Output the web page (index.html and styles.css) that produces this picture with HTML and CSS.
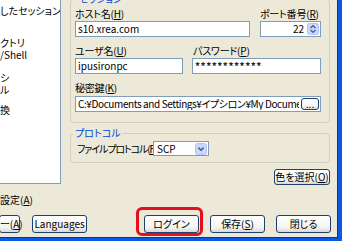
FILE: index.html
```html
<!DOCTYPE html>
<html>
<head>
<meta charset="utf-8">
<link rel="stylesheet" href="styles.css">
</head>
<body>
<div class="window">
<div class="client">

  <div class="main">
    <div class="tree">
      <div class="node">したセッション</div>
      <div class="node gap-l">クトリ</div>
      <div class="node">/Shell</div>
      <div class="node gap-m">シ</div>
      <div class="node">ル</div>
      <div class="node gap-s">換</div>
    </div>

    <div class="panel">
      <div class="group session">
        <div class="group-title">セッション</div>
        <div class="row row-host">
          <div class="field host">
            <span class="caption">ホスト名(<u>H</u>)</span>
            <div class="edit">s10.xrea.com</div>
          </div>
          <div class="field port">
            <span class="caption">ポート番号(<u>R</u>)</span>
            <div class="edit spin">
              <span class="value">22</span>
              <svg class="spin-btn" width="12" height="12" viewBox="0 0 12 12">
                <rect x="0.5" y="0.5" width="11" height="11" rx="2" fill="#C9D8FC" stroke="#AFC4F4"/>
                <path d="M3.5 5 L6 2.7 L8.5 5" fill="none" stroke="#4D6185" stroke-width="1.3"/>
                <path d="M3.5 7 L6 9.3 L8.5 7" fill="none" stroke="#4D6185" stroke-width="1.3"/>
              </svg>
            </div>
          </div>
        </div>
        <div class="row row-user">
          <div class="field user">
            <span class="caption">ユーザ名(<u>U</u>)</span>
            <div class="edit">ipusironpc</div>
          </div>
          <div class="field pass">
            <span class="caption">パスワード(<u>P</u>)</span>
            <div class="edit secret">************</div>
          </div>
        </div>
        <div class="row row-key">
          <div class="field key">
            <span class="caption">秘密鍵(<u>K</u>)</span>
            <div class="edit keyfile">
              <span class="path">C:¥Documents and Settings¥イプシロン¥My Documents</span>
              <button class="btn browse">...</button>
            </div>
          </div>
        </div>
      </div>

      <div class="group protocol">
        <div class="group-title">プロトコル</div>
        <div class="proto-row">
          <span class="caption proto-label">ファイルプロトコル(<u>F</u>)</span>
          <div class="combo">
            <span class="value">SCP</span>
            <svg class="combo-btn" width="12" height="12" viewBox="0 0 12 12">
              <rect x="0.5" y="0.5" width="11" height="11" rx="2" fill="#C9D8FC" stroke="#AFC4F4"/>
              <path d="M3.4 4.6 L6 7.2 L8.6 4.6" fill="none" stroke="#4D6185" stroke-width="1.6"/>
            </svg>
          </div>
        </div>
      </div>

      <div class="color-row">
        <button class="btn color">色を選択(<u>O</u>)</button>
      </div>
    </div>
  </div>

  <div class="advanced">設定(<u>A</u>)</div>

  <div class="buttons">
    <div class="btn-group left">
      <button class="btn about">ー(<u>A</u>)</button>
      <button class="btn lang">Languages</button>
    </div>
    <div class="btn-group right">
      <span class="highlight"><button class="btn login">ログイン</button></span>
      <button class="btn save">保存(<u>S</u>)</button>
      <button class="btn close">閉じる</button>
    </div>
  </div>

</div>
</div>
</body>
</html>
```

FILE: styles.css
```css
body {
  margin: 0;
  width: 342px;
  height: 241px;
  overflow: hidden;
  background: #ECE9D8;
  font-family: "Noto Sans CJK JP", sans-serif;
  font-size: 10px;
  line-height: 12px;
  font-feature-settings: "palt";
  color: #000;
}

.window {
  width: 342px;
  height: 241px;
  box-sizing: border-box;
  border-right: 4px solid #0B58E6;
  border-bottom: 3px solid #0B58E6;
  display: flex;
}

.client {
  flex: 1;
  display: flex;
  flex-direction: column;
  border-right: 1px solid #0A2F9E;
  border-bottom: 1px solid #0A2F9E;
  overflow: hidden;
}

/* left tree */
.main {
  display: flex;
  align-items: flex-start;
}

.tree {
  width: 61px;
  height: 184px;
  box-sizing: border-box;
  background: #fff;
  border-right: 1px solid #7F9DB9;
  border-bottom: 1px solid #7F9DB9;
  padding-top: 5px;
  white-space: nowrap;
  overflow: hidden;
}

.gap-l { margin-top: 20px; }
.gap-m { margin-top: 11px; }
.gap-s { margin-top: 8px; }

/* right side */
.panel {
  margin-left: 9px;
  width: 260px;
  display: flex;
  flex-direction: column;
}

.group {
  border: 1px solid #D0D0BF;
  border-radius: 4px;
  box-sizing: border-box;
}

.group-title {
  width: fit-content;
  margin: -7px 0 0 2px;
  padding: 0 2px;
  height: 12px;
  color: #0046D5;
  background: #ECE9D8;
}

.session {
  margin-top: -1px;
  height: 124px;
  padding: 0 8px 0 4px;
}

.row {
  display: flex;
}

.row-host { margin-top: 3px; gap: 10px; }
.row-user { margin-top: 8px; gap: 9px; }
.row-key { margin-top: 8px; }

.field {
  display: flex;
  flex-direction: column;
  gap: 1px;
}

.host { width: 175px; }
.port { width: 61px; }
.user { width: 108px; }
.pass { width: 129px; }
.key { width: 246px; gap: 2px; }

.caption {
  height: 12px;
  white-space: nowrap;
  letter-spacing: -0.2px;
}

.pass .caption { padding-left: 1px; }

.edit {
  height: 16px;
  box-sizing: border-box;
  border: 1px solid #7F9DB9;
  background: #fff;
  padding: 0 2px;
  display: flex;
  align-items: center;
  white-space: nowrap;
  overflow: hidden;
}

.spin {
  justify-content: flex-end;
  padding-right: 1px;
}

.spin .value { margin-right: 3px; }

.secret {
  letter-spacing: 0.5px;
  font-weight: bold;
  color: #222;
}

.keyfile {
  padding-right: 1px;
}

.path {
  flex: 1;
  overflow: hidden;
  white-space: nowrap;
  letter-spacing: -0.4px;
}

.btn {
  font-family: inherit;
  font-size: 10px;
  line-height: 12px;
  font-feature-settings: "palt";
  color: #000;
  box-sizing: border-box;
  border: 1px solid #1F3F72;
  border-radius: 3px;
  background: linear-gradient(#FFFFFF, #F4F4F0 70%, #DCD8CD);
  padding: 0;
  white-space: nowrap;
}

.browse {
  width: 18px;
  height: 12px;
  margin-left: 2px;
  line-height: 8px;
}

/* protocol */
.protocol {
  margin-top: 10px;
  height: 30px;
}

.proto-row {
  margin-top: 2px;
  display: flex;
  align-items: center;
  padding-left: 6px;
}

.proto-label {
  width: 76px;
  letter-spacing: -1.1px;
}

.combo {
  width: 56px;
  height: 15px;
  box-sizing: border-box;
  border: 1px solid #7F9DB9;
  background: #fff;
  display: flex;
  align-items: center;
  justify-content: space-between;
  padding: 0 1px 0 3px;
}

.color-row {
  margin-top: 6px;
  display: flex;
  justify-content: flex-end;
}

.color {
  width: 56px;
  height: 16px;
}

/* bottom */
.advanced {
  margin-top: 9px;
  height: 12px;
  white-space: nowrap;
}

.buttons {
  margin-top: 9px;
  display: flex;
  justify-content: space-between;
  height: 18px;
}

.btn-group {
  display: flex;
}

.btn-group .btn {
  height: 18px;
}

.left { gap: 12px; margin-left: -1px; }
.about { width: 21px; }
.lang { width: 55px; }

.right { gap: 11px; margin-right: 6px; }
.login, .save, .close { width: 55px; }

.highlight {
  display: flex;
  border: 3px solid #E5101C;
  border-radius: 6px;
  padding: 5px 1px 0 5px;
  margin: -8px -4px -3px -8px;
}
```
